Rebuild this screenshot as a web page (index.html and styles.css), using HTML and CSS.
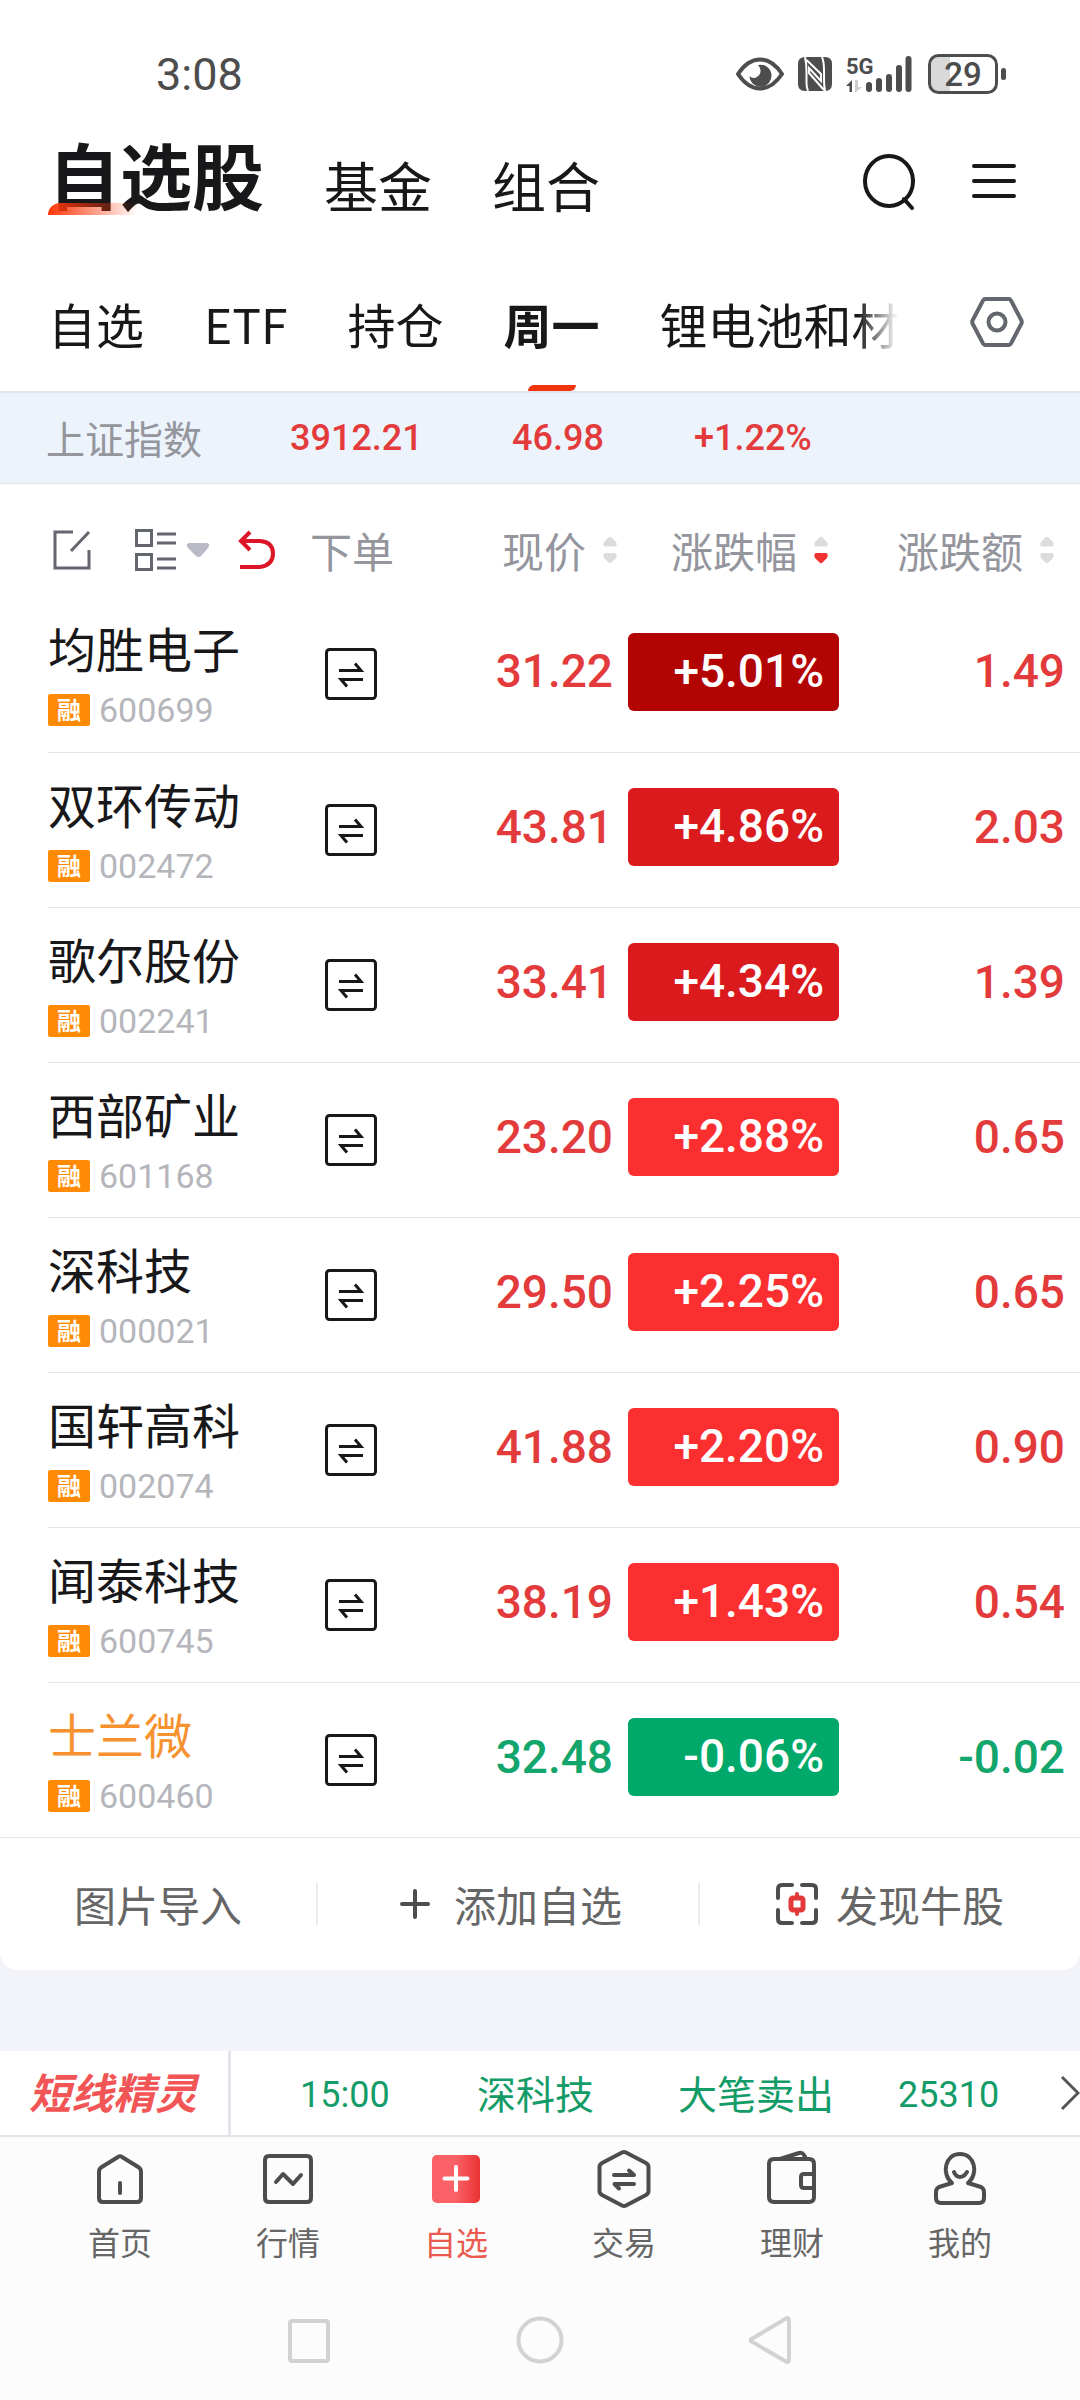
FILE: index.html
```html
<!DOCTYPE html>
<html lang="zh-CN">
<head>
  <meta charset="UTF-8">
  <meta name="viewport" content="width=device-width, initial-scale=1.0">
  <title>自选股</title>
  <link rel="stylesheet" href="styles.css">
</head>
<body>
  <svg class="defs" width="0" height="0" aria-hidden="true">
    <symbol id="order" viewBox="0 0 52 52">
      <rect x="1.5" y="1.5" width="49" height="49" rx="3" fill="none" stroke="#18181a" stroke-width="3"/>
      <path d="M14 22.500H36L30 15.500M38 31.500H16L22 38.500" fill="none" stroke="#18181a" stroke-width="3"/>
    </symbol>
    <symbol id="sort" viewBox="0 0 14 28">
      <path class="up" d="M5.500 1.500Q7 0 8.500 1.500L13 6Q15 10.500 11.500 10.500H2.500Q-1 10.500 1 6Z"/>
      <path class="down" d="M5.500 26.500Q7 28 8.500 26.500L13 22Q15 17 11.500 17H2.500Q-1 17 1 22Z"/>
    </symbol>
  </svg>

  <div class="status">
    <span class="time">3:08</span>
    <div class="status-icons">
      <svg width="48" height="34" viewBox="0 0 48 34">
        <path d="M2 17C8 8 15 2.500 24 2.500S40 8 46 17C40 26 33 31.500 24 31.500S8 26 2 17Z" fill="none" stroke="#4d4d4d" stroke-width="4"/>
        <path d="M22 8A11 11 0 1 1 13.500 19Q16 22 20 20.500Q25 18 24.500 13Q24 10 22 8Z" fill="#4d4d4d"/>
      </svg>
      <svg class="nfc" width="34" height="34" viewBox="0 0 34 34">
        <path d="M7 0H27Q34 0 34 7V27Q34 34 27 34H7Q0 34 0 27V7Q0 0 7 0Z" fill="#4d4d4d"/>
        <path d="M7 0Q8.500 6 8.500 15V26Q8.500 31 10 34M24 0Q26 5 26 13V22Q26 29 27 34M8.500 3L23 17V24L11 11V16L26 33" fill="none" stroke="#fff" stroke-width="2"/>
      </svg>
      <svg class="signal" width="68" height="38" viewBox="0 0 68 38">
        <text x="0" y="19" class="g5">5G</text>
        <path d="M0 31L6 25V37H3.500V31Z" fill="#4d4d4d"/>
        <path d="M9 25H12V32H16L10 37H9Z" fill="#ccc"/>
        <path d="M23 30V34M33 26V34M43 22V34M53 13V34M62.500 4V34" stroke="#4d4d4d" stroke-width="6" stroke-linecap="round"/>
      </svg>
      <svg class="battery" width="78" height="40" viewBox="0 0 78 40">
        <path d="M10 3H22V37H10Q3 37 3 30V10Q3 3 10 3Z" fill="#d9d9d9"/>
        <rect x="1.500" y="1.500" width="67" height="37" rx="9" fill="none" stroke="#4d4d4d" stroke-width="3"/>
        <rect x="73" y="14" width="5" height="12" rx="2.500" fill="#4d4d4d"/>
        <text x="35" y="32" text-anchor="middle" class="level">29</text>
      </svg>
    </div>
  </div>

  <header class="header">
    <nav class="sections">
      <button class="active">自选股</button>
      <button>基金</button>
      <button>组合</button>
    </nav>
    <button class="icon-btn" aria-label="搜索">
      <svg width="52" height="58" viewBox="0 0 52 58"><path d="M26 4A24 25 0 1 0 26 54A24 25 0 1 0 26 4ZM41 47L49 56" fill="none" stroke="#18181a" stroke-width="4" stroke-linecap="round"/></svg>
    </button>
    <button class="icon-btn" aria-label="菜单">
      <svg width="44" height="36" viewBox="0 0 44 36"><path d="M2 3H42M2 18H42M2 33H42" stroke="#18181a" stroke-width="4" stroke-linecap="round"/></svg>
    </button>
  </header>

  <div class="groups">
    <nav class="group-list">
      <button>自选</button>
      <button>ETF</button>
      <button>持仓</button>
      <button class="active">周一</button>
      <button>锂电池和材</button>
    </nav>
    <button class="icon-btn" aria-label="分组设置">
      <svg width="54" height="50" viewBox="0 0 54 50">
        <path d="M15 2H39Q40 2 41 3.500L51.500 23.500Q52 25 51.500 26.500L41 46.500Q40 48 39 48H15Q14 48 13 46.500L2.500 26.500Q2 25 2.500 23.500L13 3.500Q14 2 15 2Z" fill="none" stroke="#63656f" stroke-width="4"/>
        <circle cx="27" cy="25" r="8.500" fill="none" stroke="#63656f" stroke-width="4"/>
      </svg>
    </button>
  </div>

  <div class="index-bar">
    <span class="index-name">上证指数</span>
    <span>3912.21</span>
    <span>46.98</span>
    <span>+1.22%</span>
  </div>

  <main class="panel">
    <table class="stocks">
      <thead>
        <tr>
          <th class="name">
            <div class="tools">
              <button aria-label="编辑"><svg width="38" height="40" viewBox="0 0 38 40"><path d="M20 2H2V38H36V20M18 21L36 2" fill="none" stroke="#63656f" stroke-width="3"/></svg></button>
              <button class="layout" aria-label="列表样式"><svg width="74" height="44" viewBox="0 0 74 44"><path d="M1.500 2.500H16.500V17.500H1.500ZM1.500 26.500H16.500V41.500H1.500ZM22 6H41M22 15H41M22 31H41M22 40H41" fill="none" stroke="#63656f" stroke-width="3"/><path d="M54 15H72Q76 16 73 20L66 28Q63.500 30 61 28L53 20Q50 16 54 15Z" fill="#b9bac5"/></svg></button>
              <button aria-label="返回"><svg width="37" height="40" viewBox="0 0 37 40"><path d="M2 37H22Q35 35 35 23.500T22 11H3M12 2L3 11L12 20" fill="none" stroke="#dc1628" stroke-width="4"/></svg></button>
            </div>
          </th>
          <th class="trade">下单</th>
          <th class="price"><button>现价<svg class="sort"><use href="#sort"/></svg></button></th>
          <th class="rate"><button>涨跌幅<svg class="sort desc"><use href="#sort"/></svg></button></th>
          <th class="diff"><button>涨跌额<svg class="sort"><use href="#sort"/></svg></button></th>
        </tr>
      </thead>
      <tbody>
        <tr>
          <td class="name"><a href="#">均胜电子</a><div class="code"><i>融</i>600699</div></td>
          <td class="trade"><button aria-label="下单"><svg><use href="#order"/></svg></button></td>
          <td class="price">31.22</td>
          <td class="rate"><span class="pill limit">+5.01%</span></td>
          <td class="diff">1.49</td>
        </tr>
        <tr>
          <td class="name"><a href="#">双环传动</a><div class="code"><i>融</i>002472</div></td>
          <td class="trade"><button aria-label="下单"><svg><use href="#order"/></svg></button></td>
          <td class="price">43.81</td>
          <td class="rate"><span class="pill high">+4.86%</span></td>
          <td class="diff">2.03</td>
        </tr>
        <tr>
          <td class="name"><a href="#">歌尔股份</a><div class="code"><i>融</i>002241</div></td>
          <td class="trade"><button aria-label="下单"><svg><use href="#order"/></svg></button></td>
          <td class="price">33.41</td>
          <td class="rate"><span class="pill high">+4.34%</span></td>
          <td class="diff">1.39</td>
        </tr>
        <tr>
          <td class="name"><a href="#">西部矿业</a><div class="code"><i>融</i>601168</div></td>
          <td class="trade"><button aria-label="下单"><svg><use href="#order"/></svg></button></td>
          <td class="price">23.20</td>
          <td class="rate"><span class="pill">+2.88%</span></td>
          <td class="diff">0.65</td>
        </tr>
        <tr>
          <td class="name"><a href="#">深科技</a><div class="code"><i>融</i>000021</div></td>
          <td class="trade"><button aria-label="下单"><svg><use href="#order"/></svg></button></td>
          <td class="price">29.50</td>
          <td class="rate"><span class="pill">+2.25%</span></td>
          <td class="diff">0.65</td>
        </tr>
        <tr>
          <td class="name"><a href="#">国轩高科</a><div class="code"><i>融</i>002074</div></td>
          <td class="trade"><button aria-label="下单"><svg><use href="#order"/></svg></button></td>
          <td class="price">41.88</td>
          <td class="rate"><span class="pill">+2.20%</span></td>
          <td class="diff">0.90</td>
        </tr>
        <tr>
          <td class="name"><a href="#">闻泰科技</a><div class="code"><i>融</i>600745</div></td>
          <td class="trade"><button aria-label="下单"><svg><use href="#order"/></svg></button></td>
          <td class="price">38.19</td>
          <td class="rate"><span class="pill">+1.43%</span></td>
          <td class="diff">0.54</td>
        </tr>
        <tr class="fall">
          <td class="name"><a href="#">士兰微</a><div class="code"><i>融</i>600460</div></td>
          <td class="trade"><button aria-label="下单"><svg><use href="#order"/></svg></button></td>
          <td class="price">32.48</td>
          <td class="rate"><span class="pill">-0.06%</span></td>
          <td class="diff">-0.02</td>
        </tr>
      </tbody>
    </table>

    <div class="actions">
      <button>图片导入</button>
      <button>
        <svg width="30" height="30" viewBox="0 0 30 30"><path d="M15 2V28M2 15H28" stroke="#4d4d4d" stroke-width="4" stroke-linecap="round"/></svg>
        添加自选
      </button>
      <button class="discover">
        <svg width="42" height="42" viewBox="0 0 42 42">
          <path d="M2 15V6Q2 2 6 2H16M26 2H36Q40 2 40 6V15M40 27V36Q40 40 36 40H26M16 40H6Q2 40 2 36V27" fill="none" stroke="#4d4d4d" stroke-width="4" stroke-linecap="round"/>
          <path d="M21 11V15M21 27V31" stroke="#e23a3a" stroke-width="4" stroke-linecap="round"/>
          <rect x="15" y="15" width="12" height="12" rx="2" fill="none" stroke="#e23a3a" stroke-width="5"/>
        </svg>
        发现牛股
      </button>
    </div>
  </main>

  <div class="ticker">
    <strong>短线精灵</strong>
    <div class="ticker-item">
      <span class="num">15:00</span>
      <span>深科技</span>
      <span>大笔卖出</span>
      <span class="num">25310</span>
    </div>
    <svg width="20" height="36" viewBox="0 0 20 36"><path d="M2 2L18 18L2 34" fill="none" stroke="#555" stroke-width="3"/></svg>
  </div>

  <nav class="tabbar">
    <a href="#">
      <svg viewBox="0 0 60 60"><path d="M28 8Q30 6.500 32 8L49 18.500Q51 20 51 23V49Q51 53 47 53H13Q9 53 9 49V23Q9 20 11 18.500ZM30 34V44" /></svg>
      首页
    </a>
    <a href="#">
      <svg viewBox="0 0 60 60"><path d="M11 7H49Q53 7 53 11V49Q53 53 49 53H11Q7 53 7 49V11Q7 7 11 7ZM18 33L25 25L35 35L43 26"/></svg>
      行情
    </a>
    <a href="#" class="active">
      <svg viewBox="0 0 60 60">
        <defs><linearGradient id="red"><stop offset="0.5" stop-color="#fa6166"/><stop offset="1" stop-color="#ea3333"/></linearGradient></defs>
        <rect class="solid" x="6" y="6" width="48" height="48" rx="5"/>
        <path class="plus" d="M30 18V41M18.500 29.500H41.500"/>
      </svg>
      自选
    </a>
    <a href="#">
      <svg viewBox="0 0 60 60"><path d="M28 3.500Q30 2.500 32 3.500L52 14Q54.500 15.500 54.500 18V42Q54.500 44.500 52 46L32 56.500Q30 57.500 28 56.500L8 46Q5.500 44.500 5.500 42V18Q5.500 15.500 8 14ZM20 26H40L35 21.500M40 35H20.500L25 39.500"/></svg>
      交易
    </a>
    <a href="#">
      <svg viewBox="0 0 60 60"><path d="M12 10H47Q52 10 52 15V48Q52 53 47 53H12Q7 53 7 48V15Q7 10 12 10ZM52 25H42Q39 25 39 28V36Q39 39 42 39H52M18 10L37 4Q40 3 42 6L44 10"/></svg>
      理财
    </a>
    <a href="#">
      <svg viewBox="0 0 60 60"><path d="M22 34C11 25 15 5 30 5S49 25 38 34L51 38Q54 39.500 54 43V49Q54 54 49 54H11Q6 54 6 49V43Q6 39.500 9 38ZM24 23Q26 28 30 28T37 23"/></svg>
      我的
    </a>
  </nav>

  <div class="system-nav">
    <button aria-label="最近任务"><svg viewBox="0 0 48 48"><rect x="5" y="5" width="38" height="40" rx="2"/></svg></button>
    <button aria-label="主屏幕"><svg viewBox="0 0 48 48"><circle cx="24" cy="24" r="21.500"/></svg></button>
    <button aria-label="返回"><svg viewBox="0 0 48 48"><path d="M4.500 23L39 2.500Q42 1 42 5V43Q42 47 39 45.500L4.500 25.500Q3 24 4.500 23Z"/></svg></button>
  </div>
</body>
</html>
```
FILE: styles.css
```css
* {
  box-sizing: border-box;
}

body {
  margin: 0;
  min-height: 100vh;
  display: flex;
  flex-direction: column;
  background: #f3f4f9;
  color: #18181a;
  font-family: "Noto Sans CJK SC", sans-serif;
}

button {
  padding: 0;
  border: none;
  background: none;
  color: inherit;
  font: inherit;
  cursor: pointer;
}

a {
  color: inherit;
  text-decoration: none;
}

svg {
  display: block;
  flex-shrink: 0;
}

.defs {
  position: absolute;
}

/* status bar */
.status {
  display: flex;
  justify-content: space-between;
  align-items: center;
  height: 124px;
  padding: 24px 74px 0 156px;
  background: #fff;
}

.time {
  color: #4d4d4d;
  font-family: Roboto, sans-serif;
  font-size: 45px;
}

.status-icons {
  display: flex;
  align-items: center;
  gap: 14px;
}

.signal {
  overflow: visible;
}

.g5 {
  font-family: Roboto, sans-serif;
  font-size: 22px;
  font-weight: bold;
  fill: #4d4d4d;
}

.level {
  font-family: Roboto, sans-serif;
  font-size: 33px;
  font-weight: 500;
  fill: #4d4d4d;
}

/* header */
.header {
  display: flex;
  align-items: center;
  gap: 57px;
  height: 114px;
  padding: 0 64px 0 48px;
  background: #fff;
}

.sections {
  display: flex;
  align-items: flex-end;
  gap: 60px;
  margin: 0 auto 16px 0;
  font-size: 54px;
  line-height: 54px;
}

.sections .active {
  position: relative;
  font-size: 72px;
  font-weight: bold;
  line-height: 78px;
}

.sections .active::after {
  content: "";
  position: absolute;
  left: 0;
  bottom: -3px;
  width: 90px;
  height: 12px;
  border-top-left-radius: 12px;
  background: linear-gradient(to right, #ff3508, rgba(255, 53, 8, 0));
}

/* groups */
.groups {
  display: flex;
  align-items: center;
  justify-content: space-between;
  height: 155px;
  padding: 0 56px 0 48px;
  border-bottom: 2px solid #e4e4ea;
  background: #fff;
}

.group-list {
  display: flex;
  align-self: stretch;
  gap: 60px;
  width: 856px;
  overflow: hidden;
  font-size: 48px;
  white-space: nowrap;
  -webkit-mask-image: linear-gradient(to right, #000 810px, transparent 850px);
  mask-image: linear-gradient(to right, #000 810px, transparent 850px);
}

.group-list button {
  flex-shrink: 0;
  padding-top: 16px;
}

.group-list .active {
  position: relative;
  font-weight: bold;
}

.group-list .active::after {
  content: "";
  position: absolute;
  left: 24px;
  bottom: 0;
  width: 48px;
  height: 6px;
  border-radius: 6px 0 6px 0;
  background: #f0330d;
}

.groups .icon-btn {
  padding-top: 14px;
}

/* index */
.index-bar {
  display: grid;
  grid-template-columns: 244px 222px 182px auto;
  align-items: center;
  height: 91px;
  padding-left: 46px;
  border-bottom: 1px solid #e1e4ea;
  background: #ecf3fb;
  color: #e33b3b;
  font-family: Roboto, sans-serif;
  font-size: 36px;
  font-weight: 500;
}

.index-name {
  padding-bottom: 2px;
  color: #94959d;
  font-family: "Noto Sans CJK SC", sans-serif;
  font-size: 39px;
  font-weight: normal;
}

/* stock table */
.panel {
  padding-left: 48px;
  border-radius: 0 0 18px 18px;
  background: #fff;
}

.stocks {
  width: 100%;
  table-layout: fixed;
  border-collapse: collapse;
}

.stocks th,
.stocks td {
  padding: 0;
}

.stocks th {
  height: 113px;
  padding-top: 18px;
  color: #94959d;
  font-size: 42px;
  font-weight: normal;
  text-align: left;
}

.stocks th.trade {
  width: 84px;
  white-space: nowrap;
}

.stocks th.price {
  width: 234px;
  padding-right: 11px;
}

.stocks th.rate {
  width: 211px;
  padding-right: 11px;
}

.stocks th.diff {
  width: 241px;
  padding-right: 26px;
}

.stocks th > button {
  display: flex;
  align-items: center;
  gap: 17px;
  margin-left: auto;
}

.tools {
  display: flex;
  align-items: center;
  padding-left: 5px;
}

.tools .layout {
  margin: 0 29px 0 44px;
}

.sort {
  --down: #dcdcdc;
  width: 14px;
  height: 28px;
  fill: #dcdcdc;
}

.sort.desc {
  --down: #f13232;
}

.down {
  fill: var(--down);
}

.stocks td {
  height: 155px;
  border-bottom: 1px solid #e5e5e5;
  color: #e33b3b;
  font-family: Roboto, "Noto Sans CJK SC", sans-serif;
  font-size: 46px;
  font-weight: 500;
  text-align: right;
}

.stocks tr:last-child td {
  border-bottom: none;
}

.stocks td.name {
  font-weight: normal;
  text-align: left;
}

.name a {
  display: block;
  color: #18181a;
  font-family: "Noto Sans CJK SC", sans-serif;
  font-size: 48px;
  line-height: 50px;
}

.code {
  display: flex;
  align-items: center;
  gap: 9px;
  height: 32px;
  margin-top: 22px;
  color: #b5b6bb;
  font-size: 34px;
}

.code i {
  width: 42px;
  height: 32px;
  border-radius: 2px;
  background: #ff8a05;
  color: #fff;
  font-family: "Noto Sans CJK SC", sans-serif;
  font-size: 24px;
  font-style: normal;
  font-weight: bold;
  line-height: 30px;
  text-align: center;
}

td.trade button {
  display: block;
  margin-left: 15px;
}

td.trade svg {
  width: 52px;
  height: 52px;
}

.stocks td.price,
.stocks td.diff {
  padding: 0 15px 6px 0;
}

.stocks td.rate {
  padding-bottom: 5px;
}

.pill {
  display: block;
  height: 78px;
  padding-right: 15px;
  border-radius: 6px;
  background: #fb2f2f;
  color: #fff;
  line-height: 76px;
}

.pill.limit {
  background: #b30404;
}

.pill.high {
  background: #db1a1e;
}

.fall .name a {
  color: #f5922f;
}

.stocks .fall .price,
.stocks .fall .diff {
  color: #12a56c;
}

.fall .pill {
  background: #00a96a;
}

/* actions */
.actions {
  display: grid;
  grid-template-columns: 316px 1fr 1fr;
  margin-left: -48px;
  padding: 45px 0;
  border-top: 1px solid #e5e5e5;
}

.actions button {
  display: flex;
  align-items: center;
  justify-content: center;
  gap: 24px;
  height: 42px;
  color: #666;
  font-size: 42px;
  line-height: 42px;
}

.actions button + button {
  padding-left: 6px;
  border-left: 2px solid #ebebeb;
}

.actions button.discover {
  gap: 18px;
  padding-left: 0;
}

/* ticker */
.ticker {
  display: flex;
  align-items: center;
  height: 86px;
  margin-top: auto;
  border-bottom: 2px solid #e4e4ea;
  background: #fff;
  color: #149c68;
  font-size: 39px;
}

.ticker strong {
  align-self: stretch;
  width: 231px;
  padding-left: 29px;
  border-right: 3px solid #e4e4ea;
  color: #f25555;
  font-size: 42px;
  font-style: italic;
  line-height: 80px;
}

.ticker-item {
  flex: 1;
  display: grid;
  grid-template-columns: 177px 201px 220px auto;
  align-items: center;
  padding: 0 0 2px 69px;
}

.num {
  padding-top: 5px;
  font-family: Roboto, sans-serif;
  font-size: 36px;
}

/* tab bar */
.tabbar {
  display: grid;
  grid-template-columns: repeat(6, 1fr);
  padding: 12px 36px 21px;
  background: #fcfcfc;
}

.tabbar a {
  display: flex;
  flex-direction: column;
  align-items: center;
  gap: 14px;
  color: #666;
  font-size: 32px;
  line-height: 36px;
}

.tabbar svg {
  width: 60px;
  height: 60px;
  fill: none;
  stroke: #4d4d4d;
  stroke-width: 4;
  stroke-linecap: round;
  stroke-linejoin: round;
}

.tabbar .active {
  color: #ea5a50;
}

.tabbar .solid {
  fill: url(#red);
  stroke: none;
}

.tabbar .plus {
  stroke: #fff;
}

/* system navigation */
.system-nav {
  display: flex;
  align-items: center;
  justify-content: center;
  gap: 183px;
  height: 120px;
  background: #fcfcfc;
}

.system-nav svg {
  width: 48px;
  height: 48px;
  fill: none;
  stroke: #d2d2d2;
  stroke-width: 4;
}
```
